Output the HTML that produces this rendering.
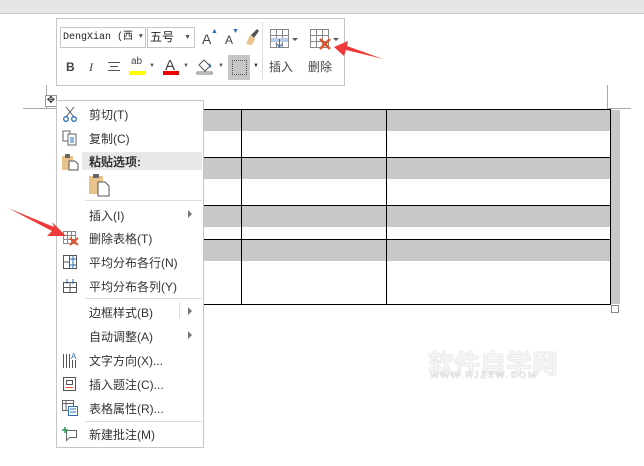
<!DOCTYPE html>
<html><head><meta charset="utf-8"><style>
body{margin:0;width:644px;height:466px;background:#fff;position:relative;overflow:hidden;font-family:"Liberation Sans","Noto Sans CJK SC",sans-serif;}
.a{position:absolute}
.mi{position:absolute;left:89px;font-size:12px;color:#333;white-space:nowrap}
.sep{position:absolute;left:85px;width:117px;height:1px;background:#ddd}
.g{background:#c8c8c8;position:absolute}
.k{background:#000;position:absolute}
</style></head><body>
<div class="a" style="left:0;top:0;width:644px;height:13px;background:#e6e6e6;border-bottom:1px solid #ccc"></div>
<div class="a" style="left:46px;top:85px;width:1px;height:23px;background:#aaa"></div>
<div class="a" style="left:23px;top:108px;width:33px;height:1px;background:#aaa"></div>
<div class="a" style="left:607px;top:85px;width:1px;height:23px;background:#aaa"></div>
<div class="a" style="left:607px;top:108px;width:24px;height:1px;background:#aaa"></div>
<div class="g" style="left:56px;top:110px;width:554px;height:21px"></div>
<div class="g" style="left:56px;top:158px;width:554px;height:21px"></div>
<div class="g" style="left:56px;top:206px;width:554px;height:21px"></div>
<div class="g" style="left:56px;top:240px;width:554px;height:21px"></div>
<div class="g" style="left:611px;top:110px;width:9px;height:194px"></div>
<div class="k" style="left:56px;top:109px;width:555px;height:1px"></div>
<div class="k" style="left:56px;top:157px;width:555px;height:1px"></div>
<div class="k" style="left:56px;top:205px;width:555px;height:1px"></div>
<div class="k" style="left:56px;top:239px;width:555px;height:1px"></div>
<div class="k" style="left:56px;top:304px;width:555px;height:1px"></div>
<div class="k" style="left:241px;top:109px;width:1px;height:196px"></div>
<div class="k" style="left:386px;top:109px;width:1px;height:196px"></div>
<div class="k" style="left:610px;top:109px;width:1px;height:196px"></div>
<div class="a" style="left:611px;top:305px;width:6px;height:6px;border:1px solid #888;background:#fff"></div>
<div class="a" style="left:428px;top:344px;font-size:26px;font-weight:bold;color:#f4f4f4;text-shadow:0 0 1px #aaa">软件自学网</div>
<div class="a" style="left:430px;top:370px;font-size:9px;color:#f0f0f0;letter-spacing:2px;text-shadow:0 0 1px #999">WWW.RJZXW.COM</div>
<div class="a" style="left:56px;top:18px;width:287px;height:66px;border:1px solid #c6c6c6;background:#fff"></div>
<div class="a" style="left:60px;top:27px;width:86px;height:21px;border:1px solid #c6c6c6;font-family:'Liberation Mono','Noto Sans CJK SC',monospace;font-size:10px;line-height:19px;padding-left:2px;color:#222;box-sizing:border-box">DengXian (西<span style="position:absolute;right:2px;font-size:7px;color:#555">▼</span></div>
<div class="a" style="left:147px;top:27px;width:48px;height:21px;border:1px solid #c6c6c6;font-size:12px;line-height:19px;padding-left:2px;color:#222;box-sizing:border-box">五号<span style="position:absolute;right:3px;font-size:7px;color:#555">▼</span></div>
<div class="a" style="left:202px;top:31px;font-size:14px;color:#444">A</div><div class="a" style="left:211px;top:28px;font-size:7px;color:#2a6ebb">▲</div>
<div class="a" style="left:225px;top:33px;font-size:12px;color:#444">A</div><div class="a" style="left:232px;top:28px;font-size:7px;color:#2a6ebb">▼</div>
<svg class="a" style="left:244px;top:28px" width="16" height="18"><path d="M2 16 L6 7 L11 11 L8 17Z" fill="#e8c48a"/><path d="M7 7 L13 1 L15 3 L10 10Z" fill="#555"/></svg>
<div class="a" style="left:262px;top:22px;width:1px;height:58px;background:#ddd"></div>
<svg class="a" style="left:270px;top:29px" width="30" height="22"><g stroke="#888" fill="none"><rect x="0.5" y="0.5" width="18" height="18"/><path d="M6.5 0v19M12.5 0v19M0 6.5h19M0 12.5h19"/></g><rect x="1" y="9" width="17" height="4" fill="#b8cde4"/><path d="M9.5 10v8M7 15l2.5 3 2.5-3" stroke="#2a6ebb" fill="none"/><path d="M22 9l3 3 3-3z" fill="#555"/></svg>
<svg class="a" style="left:310px;top:29px" width="30" height="22"><g stroke="#888" fill="none"><rect x="0.5" y="0.5" width="18" height="18"/><path d="M6.5 0v19M12.5 0v19M0 6.5h19M0 12.5h19"/></g><path d="M10 10l10 10M20 10l-10 10" stroke="#e0522a" stroke-width="2.5"/><path d="M23 9l3 3 3-3z" fill="#555"/></svg>
<div class="a" style="left:269px;top:58px;font-size:12px;color:#444">插入</div>
<div class="a" style="left:308px;top:58px;font-size:12px;color:#444">删除</div>
<div class="a" style="left:66px;top:60px;font-size:12px;font-weight:bold;color:#444">B</div>
<div class="a" style="left:89px;top:60px;font-size:12px;font-style:italic;font-family:'Liberation Serif',serif;color:#444">I</div>
<svg class="a" style="left:107px;top:61px" width="14" height="12"><path d="M1 1.5h12M3 5.5h8M1 9.5h12" stroke="#555"/></svg>
<div class="a" style="left:131px;top:56px;font-size:10px;color:#444">ab</div>
<div class="a" style="left:129px;top:71px;width:17px;height:4px;background:#ff0"></div>
<div class="a" style="left:149px;top:63px;font-size:6px;color:#555">▼</div>
<div class="a" style="left:165px;top:57px;font-size:15px;color:#444">A</div>
<div class="a" style="left:163px;top:71px;width:16px;height:4px;background:#e00"></div>
<div class="a" style="left:183px;top:63px;font-size:6px;color:#555">▼</div>
<svg class="a" style="left:196px;top:57px" width="18" height="18"><path d="M3 8l5-5 6 6-5 5z" fill="none" stroke="#555"/><path d="M13 6c2 1 3 4 1 5" fill="#2a6ebb"/><rect x="1" y="15" width="15" height="2" fill="none" stroke="#777"/></svg>
<div class="a" style="left:218px;top:63px;font-size:6px;color:#555">▼</div>
<div class="a" style="left:228px;top:55px;width:22px;height:25px;background:#c6c6c6"></div>
<div class="a" style="left:232px;top:60px;width:13px;height:13px;border:1px dotted #555"></div>
<div class="a" style="left:253px;top:63px;font-size:6px;color:#333">▼</div>
<svg class="a" style="left:330px;top:38px" width="60" height="30"><path d="M4 9 L18 3 L17 8 L53 21 L16 12 L14 18Z" fill="#f03a3a"/></svg>
<div class="a" style="left:45px;top:95px;width:10px;height:10px;border:1px solid #999;background:#fff;font-size:10px;line-height:10px;text-align:center;color:#333">✥</div>
<div class="a" style="left:56px;top:100px;width:146px;height:346px;border:1px solid #c6c6c6;background:#fff"></div>
<div class="a" style="left:82px;top:152px;width:120px;height:18px;background:#e8e8e8"></div>
<svg class="a" style="left:62px;top:106px" width="16" height="16"><path d="M4 1l8 10M12 1L4 11" stroke="#555"/><circle cx="4" cy="13" r="2.3" fill="none" stroke="#2a6ebb" stroke-width="1.3"/><circle cx="12" cy="13" r="2.3" fill="none" stroke="#2a6ebb" stroke-width="1.3"/></svg>
<div class="mi" style="top:106px">剪切(T)</div>
<svg class="a" style="left:62px;top:130px" width="16" height="16"><rect x="1" y="1" width="7" height="10" fill="#fff" stroke="#666"/><rect x="6" y="4" width="8" height="11" fill="#fff" stroke="#666"/><path d="M8 8h4M8 10h4M8 12h4" stroke="#2a6ebb"/></svg>
<div class="mi" style="top:130px">复制(C)</div>
<svg class="a" style="left:61px;top:153px" width="18" height="18"><rect x="1" y="3" width="11" height="14" fill="#e8c48a"/><rect x="4" y="1" width="5" height="4" fill="#666"/><path d="M8 8h6l3 3v6H8z" fill="#fff" stroke="#555"/></svg>
<div class="mi" style="top:153px;font-weight:bold">粘贴选项:</div>
<svg class="a" style="left:88px;top:173px" width="22" height="24"><rect x="1" y="3" width="14" height="18" fill="#e8c48a"/><rect x="5" y="1" width="6" height="4" fill="#666"/><path d="M10 9h7l4 4v10H10z" fill="#fff" stroke="#555"/></svg>
<div class="sep" style="top:200px"></div>
<div class="mi" style="top:207px">插入(I)</div><div class="a" style="left:188px;top:210px;width:0;height:0;border-left:4px solid #777;border-top:4px solid transparent;border-bottom:4px solid transparent"></div>
<svg class="a" style="left:62px;top:230px" width="18" height="16"><g stroke="#888" fill="none"><rect x="1.5" y="1.5" width="12" height="12"/><path d="M5.5 1v13M9.5 1v13M1 5.5h13M1 9.5h13"/></g><path d="M8 8l8 7M16 8l-8 7" stroke="#e0522a" stroke-width="2"/></svg>
<div class="mi" style="top:230px">删除表格(T)</div>
<svg class="a" style="left:62px;top:254px" width="16" height="16"><rect x="1.5" y="1.5" width="13" height="13" fill="none" stroke="#555"/><path d="M7.5 1v14M1 8h6" stroke="#555"/><path d="M11 1v14M8 5h6M8 11h6" stroke="#2a6ebb"/></svg>
<div class="mi" style="top:254px">平均分布各行(N)</div>
<svg class="a" style="left:62px;top:278px" width="16" height="16"><rect x="1.5" y="4.5" width="13" height="10" fill="none" stroke="#555"/><path d="M1 9.5h14M8 4v11" stroke="#555"/><path d="M5 1v5M11 1v5" stroke="#2a6ebb"/></svg>
<div class="mi" style="top:278px">平均分布各列(Y)</div>
<div class="sep" style="top:298px"></div>
<div class="mi" style="top:304px">边框样式(B)</div><div class="a" style="left:179px;top:302px;width:1px;height:16px;background:#ddd"></div><div class="a" style="left:188px;top:307px;border-left:4px solid #777;border-top:4px solid transparent;border-bottom:4px solid transparent;width:0;height:0"></div>
<div class="mi" style="top:328px">自动调整(A)</div><div class="a" style="left:188px;top:331px;border-left:4px solid #777;border-top:4px solid transparent;border-bottom:4px solid transparent;width:0;height:0"></div>
<svg class="a" style="left:62px;top:351px" width="16" height="18"><path d="M1.5 3v14M4.5 3v14M7.5 3v14M10.5 9v8M13.5 9v8" stroke="#555"/><text x="9" y="8" font-size="8" fill="#2a6ebb" font-family="Liberation Sans">A</text></svg>
<div class="mi" style="top:352px">文字方向(X)...</div>
<svg class="a" style="left:62px;top:376px" width="16" height="16"><rect x="1.5" y="1.5" width="12" height="13" fill="none" stroke="#555"/><rect x="4.5" y="4.5" width="6" height="4" fill="none" stroke="#555"/><path d="M4 11.5h7" stroke="#e0522a"/></svg>
<div class="mi" style="top:376px">插入题注(C)...</div>
<svg class="a" style="left:62px;top:400px" width="16" height="16"><rect x="0.5" y="0.5" width="11" height="10" fill="none" stroke="#666"/><path d="M0 3.5h12M4 0v11" stroke="#666"/><rect x="6.5" y="6.5" width="9" height="9" fill="#fff" stroke="#2a6ebb"/><path d="M8 9h6M8 12h6" stroke="#2a6ebb"/></svg>
<div class="mi" style="top:400px">表格属性(R)...</div>
<div class="sep" style="top:421px"></div>
<svg class="a" style="left:62px;top:426px" width="16" height="16"><path d="M4.5 4.5h10v7h-7l-3 3z" fill="none" stroke="#666"/><path d="M3 1v6M0 4h6" stroke="#2a9a5a" stroke-width="1.5"/></svg>
<div class="mi" style="top:426px">新建批注(M)</div>
<svg class="a" style="left:6px;top:205px" width="62" height="36"><path d="M2 3 L48 22 L46 17 L60 31 L41 31 L46 26Z" fill="#f03a3a"/></svg>
</body></html>
